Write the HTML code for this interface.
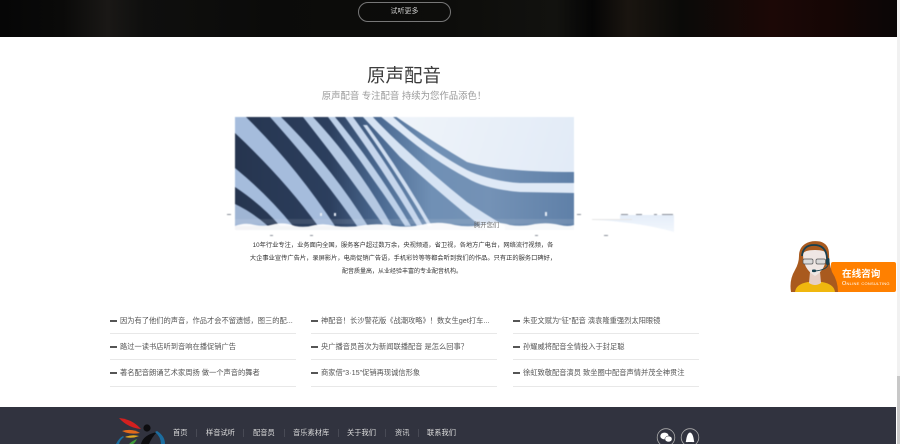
<!DOCTYPE html>
<html lang="zh">
<head>
<meta charset="utf-8">
<title>原声配音</title>
<style>
*{margin:0;padding:0;box-sizing:border-box}
html,body{width:900px;height:444px;overflow:hidden;background:#fff}
body{position:relative;font-family:"Liberation Sans","Noto Sans CJK SC",sans-serif}
.abs{position:absolute;white-space:nowrap}
#top{left:0;top:0;width:897px;height:37px;background:linear-gradient(90deg,#060606 0,#0a0a09 7%,#1a1816 12%,#0f0f0e 16%,#0b0b0a 30%,#0d0d0b 50%,#12120f 62%,#050505 66%,#1a1510 70%,#0a0a08 76%,#1c0806 86%,#150605 93%,#0a0606 100%)}
#btn{left:358px;top:2px;width:93px;height:20px;border:1px solid #777;border-radius:10px;color:#ccc;font-size:7px;line-height:18px;text-align:center;filter:blur(.25px)}
#h{left:304px;width:200px;top:64px;text-align:center;font-size:18.5px;line-height:24px;color:#3c3c3c}
#sub{left:304px;width:200px;top:90px;text-align:center;font-size:9.4px;line-height:12px;color:#999;filter:blur(.25px)}
.p{left:202px;width:400px;text-align:center;font-size:6.25px;line-height:10px;color:#333;filter:blur(.25px)}
.li{width:186px;border-bottom:1px solid #e8e8e8;font-size:7.25px;line-height:12px;color:#555;padding:0 0 0 10px;overflow:visible}
.li span{filter:blur(.3px);display:block}
.li:before{content:"";position:absolute;left:0;top:5px;width:7px;height:2px;background:#555}
#foot{left:0;top:407px;width:896px;height:37px;background:#31333f}
.n{top:428px;font-size:7.25px;line-height:10px;color:#ddd;filter:blur(.2px)}
.d{top:429px;width:1px;height:8px;background:#484a55}
#track{left:897px;top:0;width:3px;height:444px;background:#f1f1f1}
#thumb{left:897px;top:376px;width:3px;height:68px;background:#c8c8c8}
#or{left:831px;top:262px;width:65px;height:30px;background:#ff8000;border-radius:2px}
#or1{left:842px;top:269px;font-size:9.6px;line-height:11px;color:#fff;font-weight:bold}
#or2{left:842px;top:281px;font-size:5.5px;line-height:7px;color:#fff;font-variant:small-caps;letter-spacing:.25px}
</style>
</head>
<body>
<div class="abs" id="top"></div>
<div class="abs" id="btn">试听更多</div>
<div class="abs" id="track"></div>
<div class="abs" id="thumb"></div>

<div class="abs" id="h">原声配音</div>
<div class="abs" id="sub">原声配音 专注配音 持续为您作品添色！</div>

<svg class="abs" style="left:0;top:0;filter:blur(.45px)" width="900" height="444" viewBox="0 0 900 444">
<defs>
<linearGradient id="dk" x1="235" x2="574" y1="0" y2="0" gradientUnits="userSpaceOnUse">
<stop offset="0" stop-color="#26354f"/><stop offset=".28" stop-color="#2c3f5e"/><stop offset=".43" stop-color="#4b6a92"/><stop offset=".58" stop-color="#7090b5"/><stop offset=".75" stop-color="#7492b6"/><stop offset="1" stop-color="#5f80a8"/>
</linearGradient>
<linearGradient id="sky" x1="400" x2="574" y1="117" y2="172" gradientUnits="userSpaceOnUse">
<stop offset="0" stop-color="#eff4fa"/><stop offset="1" stop-color="#e2ebf7"/>
</linearGradient>
<linearGradient id="rf" x1="0" x2="0" y1="214" y2="234" gradientUnits="userSpaceOnUse">
<stop offset="0" stop-color="#e4edf9"/><stop offset="1" stop-color="#f4f8fd"/>
</linearGradient>
<clipPath id="c"><rect x="235" y="117" width="339" height="113"/></clipPath>
</defs>
<g clip-path="url(#c)">
<rect x="235" y="117" width="339" height="113" fill="url(#dk)"/>
<path d="M395 116Q430 140 467 162Q500 172 574 172V116Z" fill="url(#sky)"/>
<path d="M392 116L400 123Q433 152 467 170Q490 181 520 183L574 183V193L520 192Q485 189 467 178Q433 160 400 132L380 116Z" fill="#dfe9f6"/>
<path d="M372 116Q385 130 400 144Q433 175 467 202Q485 214 505 226V232H490Q475 222 467 215Q433 187 400 157Q380 135 362 116Z" fill="#d6e3f3"/>
<path d="M235 117H246Q295 165 335 226H318Q285 180 235 133Z" fill="#a5bcdc"/>
<path d="M235 168Q268 195 293 226H280Q262 205 235 187Z" fill="#a5bcdc"/>
<path d="M235 204Q252 212 268 226H235Z" fill="#9fb5d4"/>
<path d="M270 117H281Q330 165 368 226H357Q322 175 270 117Z" fill="#abc1de"/>
<path d="M303 117H313Q358 165 392 226H384Q345 170 303 117Z" fill="#b4c8e2"/>
<path d="M328 117H335Q375 165 411 226H405Q368 170 328 117Z" fill="#bdd0e8"/>
<path d="M345 117H353Q392 170 423 226H417Q383 170 345 117Z" fill="#c6d6ec"/>
<path d="M363 125H367Q403 175 432 226H428Q398 175 363 125Z" fill="#d0def0"/>
<path d="M235 226Q245 222 255 225Q265 227 275 224Q285 222 295 226Q305 228 315 225Q325 223 335 226Q350 228 365 225Q380 223 395 226Q410 228 425 224Q440 221 455 225Q470 228 485 224Q498 221 510 225Q522 227 535 224Q548 222 560 225Q568 227 574 225V232H235Z" fill="#fff" opacity=".95"/>
<rect x="235" y="219" width="339" height="5" fill="#fff" opacity=".1"/>
</g>
<path d="M620 215H674V232Q650 225 620 222Q605 220 592 220V219H620Z" fill="url(#rf)"/>
<rect x="592" y="219" width="40" height="1" fill="#e6e6e6"/>
<g fill="#8a8f98">
<rect x="227" y="214" width="4" height="1"/><rect x="577" y="214" width="4" height="1"/>
<rect x="621" y="214" width="7" height="1"/><rect x="636" y="214" width="6" height="1"/><rect x="654" y="214" width="3" height="1"/><rect x="662" y="214" width="11" height="1"/>
<rect x="270" y="235" width="3" height="1"/><rect x="310" y="235" width="3" height="1"/><rect x="604" y="235" width="4" height="1"/><rect x="535" y="235" width="3" height="1"/>
</g>
<g fill="#e8eef6">
<rect x="320" y="213" width="2" height="3"/><rect x="334" y="213" width="2" height="3"/><rect x="545" y="212" width="2" height="4"/>
</g>
</svg>

<div class="abs" style="left:474px;top:222px;font-size:6.3px;line-height:8px;color:#666;filter:blur(.3px)">腾开您们</div>
<div class="abs p" style="top:241px;left:203px">10年行业专注，业务面向全国，服务客户超过数万余，央视频道，省卫视，各地方广电台，网络流行视频，各</div>
<div class="abs p" style="top:254px;left:203px">大企事业宣传广告片，录屏影片，电商促销广告语，手机彩铃等等都会听到我们的作品。只有正的服务口碑好，</div>
<div class="abs p" style="top:267px;left:202px;font-size:6px">配音质量高，从业经验丰富的专业配音机构。</div>

<div class="abs li" style="left:110px;top:315px;height:19px"><span>因为有了他们的声音，作品才会不留遗憾，图三的配...</span></div>
<div class="abs li" style="left:110px;top:341px;height:19px"><span>路过一读书店听到音响在播促销广告</span></div>
<div class="abs li" style="left:110px;top:367px;height:20px"><span>著名配音朗诵艺术家周扬 做一个声音的舞者</span></div>
<div class="abs li" style="left:311px;top:315px;height:19px"><span>神配音！长沙警花版《战潮攻略》！数女生get打车...</span></div>
<div class="abs li" style="left:311px;top:341px;height:19px"><span>央广播音员首次为新闻联播配音 是怎么回事？</span></div>
<div class="abs li" style="left:311px;top:367px;height:20px"><span>商家借“3·15”促销再现诚信形象</span></div>
<div class="abs li" style="left:513px;top:315px;height:19px"><span>朱亚文赋为“征”配音 演袁隆重强烈太阳眼镜</span></div>
<div class="abs li" style="left:513px;top:341px;height:19px"><span>孙耀威将配音全情投入于封足聪</span></div>
<div class="abs li" style="left:513px;top:367px;height:20px"><span>徐虹致敬配音演员 致坐圈中配音声情并茂全神贯注</span></div>

<div class="abs" id="foot"></div>
<svg class="abs" style="left:110px;top:410px;filter:blur(.3px)" width="60" height="34" viewBox="110 410 60 34">
<path d="M119 418Q132 419 141 429Q128 428 119 418Z" fill="#d3201f"/>
<path d="M122 431Q132 428 140 433Q130 435 122 431Z" fill="#e2691c"/>
<path d="M125 437Q132 434 139 436Q132 439 125 437Z" fill="#e3a91f"/>
<path d="M129 444Q132 441 137 439Q135 443 133 444Z" fill="#3f9a3a"/>
<path d="M116 444Q119 438 123 436L124 437Q120 440 119 444Z" fill="#1a6fa0"/>
<circle cx="147" cy="428" r="3.6" fill="#0d0d10"/>
<path d="M141 444Q143 435 157 432Q152 437 149 444Z" fill="#0d0d10"/>
<path d="M157 431Q165 436 165 444H161Q161 437 155 432Z" fill="#1b6da0"/>
</svg>
<div class="abs n" style="left:173px">首页</div><div class="abs d" style="left:196px"></div>
<div class="abs n" style="left:206px">样音试听</div><div class="abs d" style="left:243px"></div>
<div class="abs n" style="left:253px">配音员</div><div class="abs d" style="left:284px"></div>
<div class="abs n" style="left:293px">音乐素材库</div><div class="abs d" style="left:338px"></div>
<div class="abs n" style="left:347px">关于我们</div><div class="abs d" style="left:385px"></div>
<div class="abs n" style="left:395px">资讯</div><div class="abs d" style="left:418px"></div>
<div class="abs n" style="left:427px">联系我们</div>

<svg class="abs" style="left:650px;top:424px" width="56" height="20" viewBox="650 424 56 20">
<circle cx="666" cy="437.5" r="8.8" fill="none" stroke="#aaa" stroke-width=".8"/>
<circle cx="690" cy="437.5" r="8.8" fill="none" stroke="#aaa" stroke-width=".8"/>
<ellipse cx="664.5" cy="436" rx="4.2" ry="3.4" fill="#fff"/>
<ellipse cx="668.5" cy="439" rx="3.6" ry="3" fill="#fff" stroke="#31333f" stroke-width=".5"/>
<path d="M686 441Q687 433 690 432.5Q693 433 694 441Q695 442.5 692 442H688Q685 442.5 686 441Z" fill="#fff"/>
</svg>

<div class="abs" id="or"></div>
<svg class="abs" style="left:788px;top:239px;filter:blur(.3px)" width="52" height="55" viewBox="788 239 52 55">
<path d="M805 244Q799 248 799 256Q799 263 795 270Q789 280 791 292H838Q838 281 832 272Q829 263 829 254Q829 244 820 241.5Q811 240 805 244Z" fill="#a95a1e"/>
<path d="M795 292Q796 284 808 282L822 282Q834 284 835 292Z" fill="#f0b70e"/>
<path d="M810 272L820 272L821 283Q815 287 809 283Z" fill="#e6cfc6"/>
<path d="M803 254Q804 250 815 250Q826 250 826 254Q827 269 815 276Q803 269 803 254Z" fill="#efe7e4"/>
<path d="M802 256Q803 245 814 245Q826 245 827 258" fill="none" stroke="#174050" stroke-width="1.8"/>
<rect x="803" y="259" width="10" height="5" rx="1.5" fill="#d9d9d9" stroke="#555" stroke-width=".7"/>
<rect x="816" y="259" width="9.5" height="5" rx="1.5" fill="#d9d9d9" stroke="#555" stroke-width=".7"/>
<rect x="826" y="258" width="3.5" height="7" rx="1.5" fill="#174050"/>
<path d="M828 265Q826 270 815 271" fill="none" stroke="#174050" stroke-width="1"/>
<rect x="812" y="269.5" width="4" height="2.6" rx="1" fill="#174050"/>
</svg>
<div class="abs" id="or1">在线咨询</div>
<div class="abs" id="or2">Online consulting</div>
</body>
</html>
